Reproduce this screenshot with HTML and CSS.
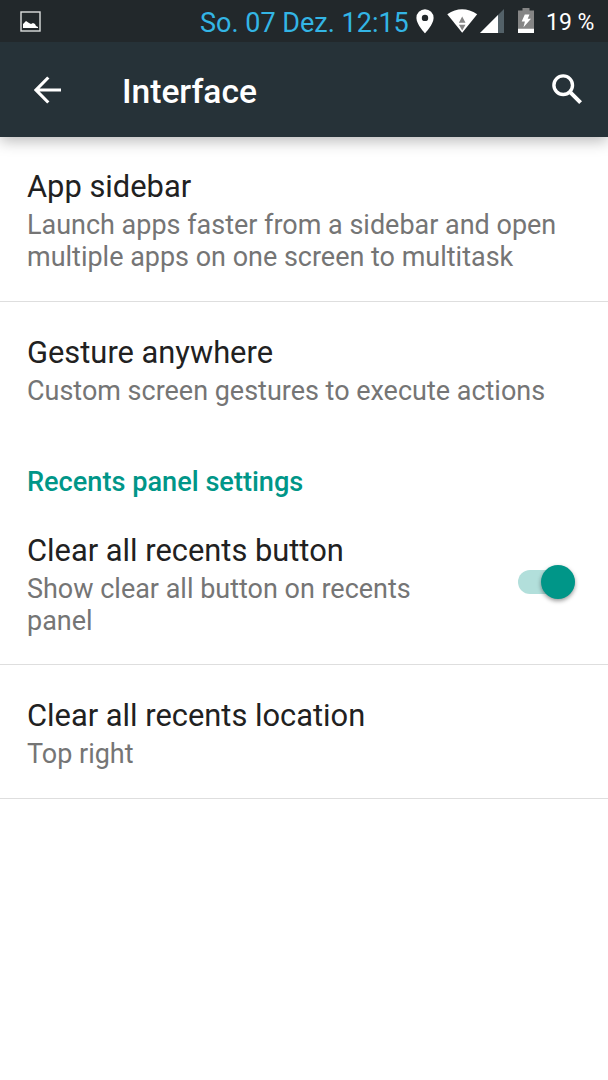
FILE: index.html
```html
<!DOCTYPE html>
<html lang="en">
<head>
<meta charset="utf-8">
<title>Interface</title>
<link rel="stylesheet" href="styles.css">
</head>
<body>
<div class="statusbar">
  <svg class="picture" width="22" height="22" viewBox="0 0 22 22"><rect x="1" y="1" width="19" height="19" fill="none" stroke="#dcdedf" stroke-width="1.4"/><path d="M3 17V13l3-3 3 2 2 1 2-1 2 1 1 2 2 1v1z" fill="#fff"/></svg>
  <span class="clock">So. 07 Dez. 12:15</span>
  <svg class="pin" width="18" height="25" viewBox="0 0 18 25"><path fill="#fff" fill-rule="evenodd" d="M9 .3A8.6 8.6 0 0 0 .4 9C.4 15.400 9 24.300 9 24.300S17.600 15.400 17.600 9A8.600 8.600 0 0 0 9 .3zM9 5.700a3.200 3.200 0 1 1 0 6.400 3.200 3.200 0 0 1 0-6.400z"/></svg>
  <svg class="wifi" width="31" height="24" viewBox="0 0 31 24"><path fill="#fff" d="M.3 5.300Q15 -4.700 30.200 5.300L15.200 23.800z"/><path fill="#858585" d="M15.200 7.500l3.300 6.200h-6.600zM11.900 15.700h6.600l-3.300 5.800z"/></svg>
  <svg class="signal" width="24" height="24" viewBox="0 0 24 24"><path fill="#536168" d="M24 0v24H0z"/><path fill="#fff" d="M18 6v18H0z"/></svg>
  <svg class="battery" width="16" height="25" viewBox="0 0 16 25"><path fill="#858585" d="M0 2.500h4.500V0h7v2.500H16V21H0z"/><path fill="#fff" d="M0 20.700h16V25H0zM6.800 6.500h4.700l-1.800 4.200H13L5.500 19.300l1.400-5.800H3.700z"/></svg>
  <span class="percent">19 %</span>
</div>
<header class="appbar">
  <svg class="back" width="28" height="28" viewBox="0 0 28 28"><path d="M27 14H2.500M14.300 1.500L2 14l12.300 12.500" fill="none" stroke="#fff" stroke-width="3.200"/></svg>
  <h1 class="heading">Interface</h1>
  <svg class="search" width="31" height="31" viewBox="0 0 31 31"><circle cx="11.200" cy="11.200" r="9.300" fill="none" stroke="#fff" stroke-width="3.400"/><path d="M18.600 18.600l10 10" stroke="#fff" stroke-width="4" fill="none"/></svg>
</header>
<main class="settings">
  <section class="item divided first">
    <div class="title">App sidebar</div>
    <div class="summary">Launch apps faster from a sidebar and open<br>multiple apps on one screen to multitask</div>
  </section>
  <section class="item">
    <div class="title">Gesture anywhere</div>
    <div class="summary">Custom screen gestures to execute actions</div>
  </section>
  <h2 class="category">Recents panel settings</h2>
  <section class="item divided with-switch">
    <div>
      <div class="title">Clear all recents button</div>
      <div class="summary">Show clear all button on recents<br>panel</div>
    </div>
    <div class="switch"><div class="thumb"></div></div>
  </section>
  <section class="item divided last">
    <div class="title">Clear all recents location</div>
    <div class="summary">Top right</div>
  </section>
</main>
</body>
</html>
```
FILE: styles.css
```css
* { box-sizing: border-box; }
body { margin: 0; height: 1080px; overflow: hidden; background: #fff; font-family: Roboto, sans-serif; white-space: nowrap; }
svg { display: block; flex: none; }
.statusbar { display: flex; align-items: flex-start; height: 42px; padding-left: 20px; background: #22282b; }
.picture { margin-top: 11px; }
.clock { width: 208px; margin-left: 158px; margin-top: 7px; font-size: 27px; line-height: 32px; color: #33b5e5; }
.pin { margin: 9px 0 0 8px; }
.wifi { margin: 9px 0 0 13px; }
.signal { margin: 9px 0 0 2px; }
.battery { margin: 8px 0 0 14px; }
.percent { margin: 8px 0 0 12px; font-size: 23px; line-height: 30px; color: #fff; }
.appbar { display: flex; align-items: center; position: relative; height: 95px; padding: 0 25px 0 34px; background: #263238; box-shadow: 0 4px 14px rgba(0, 0, 0, .28); clip-path: inset(0 0 -24px 0); }
.back { margin-top: 1px; }
.heading { flex: 1; margin: 4px 0 0 60px; font-size: 33.600px; font-weight: 500; line-height: 40px; color: #fff; }
.search { margin-bottom: 1px; }
.item { padding: 31px 27px 27px; }
.first { padding: 30px 27px 28px; }
.last { padding-bottom: 28px; }
.divided { border-bottom: 1px solid #dedede; }
.title { margin-bottom: 2px; font-size: 30.850px; line-height: 40px; color: #212121; }
.summary { font-size: 26.970px; line-height: 32px; color: #757575; }
.category { margin: 0; padding: 30px 27px 0; height: 66px; font-size: 27.150px; font-weight: 500; line-height: 36px; color: #009688; }
.with-switch { display: flex; align-items: center; justify-content: space-between; padding-right: 33px; }
.switch { display: flex; align-items: center; justify-content: flex-end; width: 57px; height: 24px; margin-bottom: 4px; background: #b2dfdb; border-radius: 12px; }
.thumb { width: 34px; height: 34px; flex: none; border-radius: 50%; background: #009688; box-shadow: 0 2px 4px rgba(0, 0, 0, .4); }
```
